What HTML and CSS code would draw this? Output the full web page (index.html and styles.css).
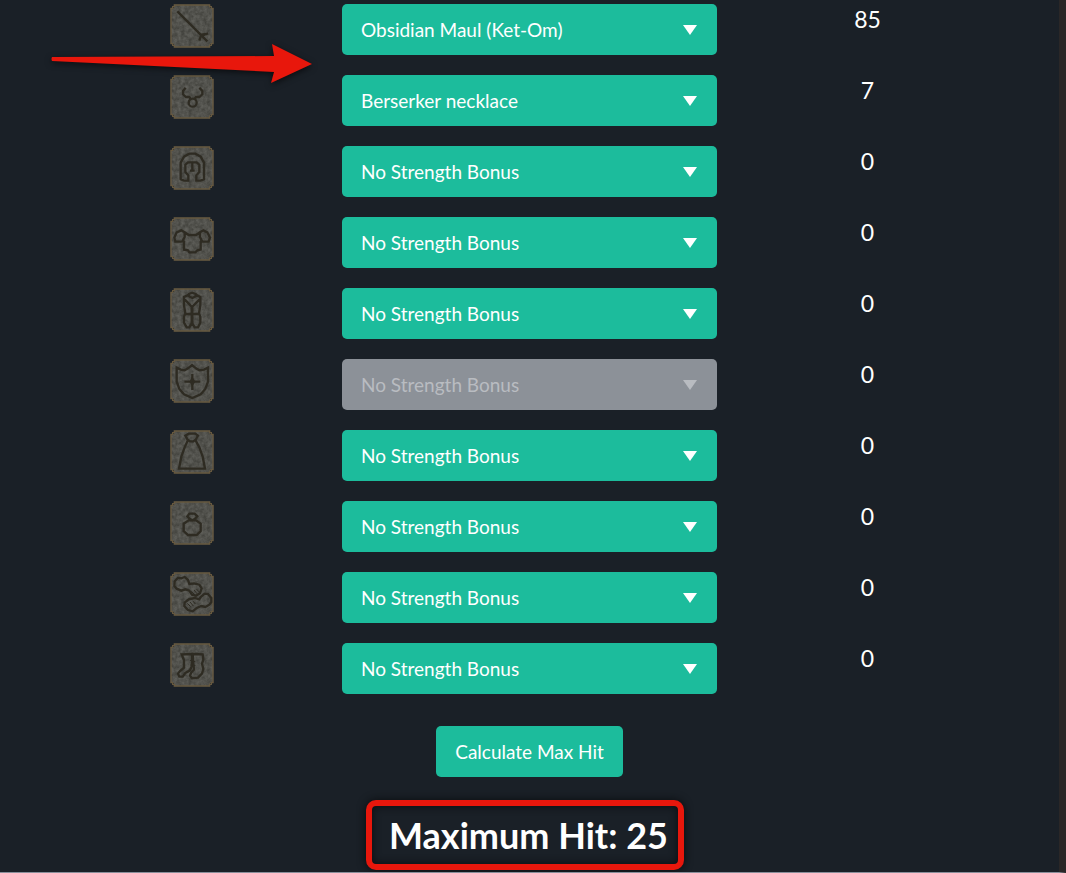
FILE: index.html
```html
<!DOCTYPE html>
<html lang="en">
<head>
    <meta charset="UTF-8">
    <meta name="viewport" content="width=device-width, initial-scale=1.0">
    <title>Max Hit Calculator</title>
    <link rel="stylesheet" href="styles.css">
</head>
<body>
    <!-- Shared slot tile -->
    <svg class="defs" width="0" height="0" aria-hidden="true">
        <defs>
            <filter id="stone" x="0" y="0" width="100%" height="100%" color-interpolation-filters="sRGB">
                <feTurbulence type="fractalNoise" baseFrequency="0.09" numOctaves="3" seed="4" />
                <feColorMatrix type="matrix" values="0.18 0 0 0 0.23  0.18 0 0 0 0.23  0.18 0 0 0 0.21  0 0 0 0 1" />
                <feComposite in2="SourceGraphic" operator="in" />
            </filter>
            <symbol id="tile" viewBox="0 0 132 132">
                <path filter="url(#stone)" d="M12 2H120V12H130V120H120V130H12V120H2V12H12Z" />
                <path fill="none" stroke="#66583f" stroke-width="4" d="M13 3H119V8H124V13H129V119H124V124H119V129H13V124H8V119H3V13H8V8H13Z" />
            </symbol>
        </defs>
    </svg>

    <main class="calculator">
        <form id="maxHitForm">
            <div class="slot">
                <svg class="slot-icon" viewBox="0 0 132 132"><use href="#tile" /><path d="M22 22L112 112M88 110L94 92L112 90M94 92L90 104M98 94L114 88" /></svg>
                <div class="select-box">
                    <select id="weapon" name="weapon" aria-label="Weapon"><option>Obsidian Maul (Ket-Om)</option></select>
                </div>
                <output for="weapon">85</output>
            </div>

            <div class="slot">
                <svg class="slot-icon" viewBox="0 0 132 132"><use href="#tile" /><path d="M47 38L39 48V58L48 66H58L62 72M88 38L97 48V58L88 66H78L74 72" /><circle cx="68" cy="83" r="12" /></svg>
                <div class="select-box">
                    <select id="neck" name="neck" aria-label="Neck"><option>Berserker necklace</option></select>
                </div>
                <output for="neck">7</output>
            </div>

            <div class="slot">
                <svg class="slot-icon" viewBox="0 0 132 132"><use href="#tile" /><path d="M32 100V50L42 32L58 23H76L92 32L102 50V100L92 104H79V88L88 78V56L80 49H54L46 56V78L55 88V104H42ZM67 50V74M60 74H74" /></svg>
                <div class="select-box">
                    <select id="head" name="head" aria-label="Head"><option>No Strength Bonus</option></select>
                </div>
                <output for="head">0</output>
            </div>

            <div class="slot">
                <svg class="slot-icon" viewBox="0 0 132 132"><use href="#tile" /><path d="M44 72L32 74H16L13 62L20 46L34 40L44 46L56 54H78L90 46L100 40L112 46L120 62L116 74H100L90 72M44 48V60L38 72M90 48V60L96 72M42 72V98L54 100L58 106H76L82 100L92 98V72" /></svg>
                <div class="select-box">
                    <select id="body" name="body" aria-label="Body"><option>No Strength Bonus</option></select>
                </div>
                <output for="body">0</output>
            </div>

            <div class="slot">
                <svg class="slot-icon" viewBox="0 0 132 132"><use href="#tile" /><path d="M57 18L66 14L77 18V25L67 30L57 25ZM57 20L42 27V52L46 76L42 86V104L50 118H58L65 106V56L42 32M77 20L91 27V52L87 76L91 86V104L84 118H74L67 106V56L91 32M45 78H88" /></svg>
                <div class="select-box">
                    <select id="legs" name="legs" aria-label="Legs"><option>No Strength Bonus</option></select>
                </div>
                <output for="legs">0</output>
            </div>

            <div class="slot">
                <svg class="slot-icon" viewBox="0 0 132 132"><use href="#tile" /><path d="M20 26L32 32L44 34L54 28L66 18L78 28L88 34L102 32L114 26V68L106 90L92 106L67 117L42 106L28 90L20 68ZM67 45V93M43 68H91" /><path d="M62 68L67 60L72 68L67 76Z" /></svg>
                <div class="select-box">
                    <select id="shield" name="shield" aria-label="Shield" disabled><option>No Strength Bonus</option></select>
                </div>
                <output for="shield">0</output>
            </div>

            <div class="slot">
                <svg class="slot-icon" viewBox="0 0 132 132"><use href="#tile" /><path d="M46 17L56 11H76L84 17L78 28L70 34H60L52 28ZM54 30L44 52L34 80L27 116H105L98 80L88 52L76 30" /></svg>
                <div class="select-box">
                    <select id="cape" name="cape" aria-label="Cape"><option>No Strength Bonus</option></select>
                </div>
                <output for="cape">0</output>
            </div>

            <div class="slot">
                <svg class="slot-icon" viewBox="0 0 132 132"><use href="#tile" /><path d="M52 46L58 38H74L82 46L74 54L67 58L60 54ZM56 58H78L92 68V90L80 102H54L41 90V68Z" /></svg>
                <div class="select-box">
                    <select id="ring" name="ring" aria-label="Ring"><option>No Strength Bonus</option></select>
                </div>
                <output for="ring">0</output>
            </div>

            <div class="slot">
                <svg class="slot-icon" viewBox="0 0 132 132"><use href="#tile" /><path d="M14 28L24 17L34 19L44 15L54 24L58 36L72 34L88 38L95 49L90 64L78 71L66 68L58 56L46 52L34 56L20 50L13 42Z" /><path class="crease" d="M64 58L74 68M72 54L82 66M80 52L88 60" /><path d="M124 78L114 66L104 65L92 75L88 82L74 78L56 82L44 92L43 102L54 114L68 118L80 108L94 102L106 105L118 98L124 90Z" /><path class="crease" d="M52 94L62 104M60 90L70 102M70 88L76 96" /></svg>
                <div class="select-box">
                    <select id="hands" name="hands" aria-label="Hands"><option>No Strength Bonus</option></select>
                </div>
                <output for="hands">0</output>
            </div>

            <div class="slot">
                <svg class="slot-icon" viewBox="0 0 132 132"><use href="#tile" /><path d="M35 34L66 33V68L60 82L46 90L38 101H28L24 92L30 84L42 74V52Z" /><path d="M68 33L98 34L100 50L96 62L100 78L96 92L84 104L66 106L60 98L64 88L72 80L70 62Z" /><path class="crease" d="M60 52L76 56M60 66L76 68" /></svg>
                <div class="select-box">
                    <select id="feet" name="feet" aria-label="Feet"><option>No Strength Bonus</option></select>
                </div>
                <output for="feet">0</output>
            </div>

            <button type="submit" class="calculate-btn">Calculate Max Hit</button>
        </form>

        <h1 class="result">Maximum Hit: 25</h1>

        <svg class="pointer" viewBox="0 0 264 44" aria-hidden="true">
            <path d="M2 18Q1 20 2 22L224 33L221 44L262 25L222 5L224 17Z" />
        </svg>
    </main>

    <script>
        document.getElementById('maxHitForm').addEventListener('submit', function(event) {
            event.preventDefault();
        });
    </script>
</body>
</html>
```
FILE: styles.css
```css
* {
    box-sizing: border-box;
}
body {
    margin: 0;
    min-height: 100vh;
    font-family: Lato, sans-serif;
    color: white;
    background-color: #1a2027;
    border-right: 7px solid #2a2727;
    border-bottom: 1px solid #8a8f9b;
}
.defs {
    position: absolute;
}
.calculator {
    position: relative;
    padding: 4px 41px 2px;
}
.slot {
    display: grid;
    grid-template-columns: 1fr 375px 1fr;
    justify-items: center;
    margin-bottom: 20px;
}
.slot-icon {
    width: 44px;
    height: 44px;
}
.slot-icon path,
.slot-icon circle {
    fill: none;
    stroke: #2e2b22;
    stroke-width: 7px;
}
.slot-icon .crease {
    stroke-width: 3px;
}
.select-box {
    position: relative;
    width: 100%;
}
.select-box::after {
    content: "";
    position: absolute;
    top: 21px;
    right: 20px;
    border: 7px solid transparent;
    border-top: 10px solid white;
    border-bottom: none;
    pointer-events: none;
}
select,
.calculate-btn {
    display: block;
    height: 51px;
    padding: 0 19px;
    font-family: inherit;
    font-size: 19px;
    color: white;
    background-color: #1cbc9c;
    border: none;
    border-radius: 5px;
    cursor: pointer;
}
select {
    width: 100%;
    appearance: none;
}
select:disabled {
    color: #b9bcc1;
    background-color: #8c9198;
    opacity: 1;
    cursor: default;
}
.select-box:has(select:disabled)::after {
    border-top-color: #b9bcc1;
}
output {
    font-size: 23px;
    line-height: 30px;
}
.calculate-btn {
    margin: 32px auto 0;
}
.result {
    width: 318px;
    margin: 23px auto 0;
    padding: 0 8px 0 16px;
    position: relative;
    left: -5px;
    font-size: 36px;
    line-height: 58px;
    text-align: center;
    white-space: nowrap;
    border: 6px solid #e8170c;
    border-radius: 10px;
    box-shadow: 0 0 8px #0a0c0f, inset 0 0 8px #0a0c0f;
}
.pointer {
    position: absolute;
    top: 39px;
    left: 50px;
    width: 264px;
    height: 44px;
    overflow: visible;
    fill: #e8170c;
    filter: drop-shadow(0 2px 3px #0a0c0f);
}
```
